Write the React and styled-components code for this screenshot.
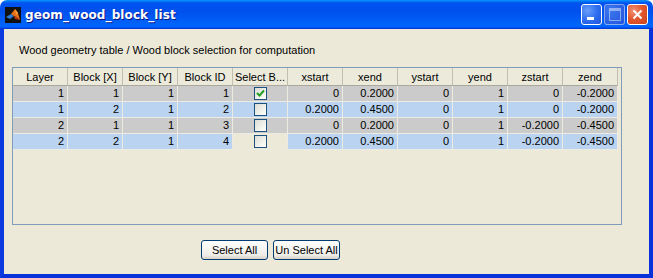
import React from 'react';
import styled, { createGlobalStyle } from 'styled-components';

const Global = createGlobalStyle`
  html, body { margin: 0; padding: 0; background: #fff; }
  body { font-family: "Liberation Sans", Arial, sans-serif; }
`;

const columns = ['Layer', 'Block [X]', 'Block [Y]', 'Block ID', 'Select B...', 'xstart', 'xend', 'ystart', 'yend', 'zstart', 'zend'];

const rows = [
  { vals: ['1', '1', '1', '1', true, '0', '0.2000', '0', '1', '0', '-0.2000'], tone: 'gray', boxTone: 'gray' },
  { vals: ['1', '2', '1', '2', false, '0.2000', '0.4500', '0', '1', '0', '-0.2000'], tone: 'blue', boxTone: 'blue' },
  { vals: ['2', '1', '1', '3', false, '0', '0.2000', '0', '1', '-0.2000', '-0.4500'], tone: 'gray', boxTone: 'gray' },
  { vals: ['2', '2', '1', '4', false, '0.2000', '0.4500', '0', '1', '-0.2000', '-0.4500'], tone: 'blue', boxTone: 'plain' },
];

const tones = { gray: '#cbcbcb', blue: '#b9d3f1', plain: '#ece9d8' };

const Window = styled.div`
  width: 653px;
  height: 278px;
  display: flex;
  flex-direction: column;
  overflow: hidden;
`;

const TitleBar = styled.div`
  height: 29px;
  flex: none;
  display: flex;
  align-items: center;
  padding: 0 5px 0 5px;
  border-radius: 7px 7px 0 0;
  background: linear-gradient(to bottom, #0997ff 0%, #0053ee 10%, #0050ee 40%, #0062f8 80%, #0066ff 90%, #005bff 94%, #003dd7 97%, #003dd7 100%);
`;

const Title = styled.span`
  margin-left: 4px;
  color: #fff;
  font-family: "DejaVu Sans", Verdana, sans-serif;
  font-weight: bold;
  font-size: 12px;
  letter-spacing: 0.1px;
  text-shadow: 1px 1px 0 #0a1883;
  flex: 1;
`;

const Controls = styled.div`
  display: flex;
  gap: 2px;
`;

const CtlButton = styled.div`
  width: 19px;
  height: 19px;
  border: 1px solid ${p => (p.$disabled ? 'rgba(255,255,255,0.45)' : '#fff')};
  border-radius: 3px;
  position: relative;
  background: ${p =>
    p.$close
      ? 'radial-gradient(circle at 30% 30%, #f0937a 0%, #e3582f 45%, #c9411b 100%)'
      : p.$disabled
      ? 'radial-gradient(circle at 30% 30%, #3d78ef 0%, #2b62e4 60%, #2155d8 100%)'
      : 'radial-gradient(circle at 30% 30%, #6a9ef8 0%, #2f6ff0 50%, #1d55dd 100%)'};
  display: flex;
  align-items: center;
  justify-content: center;
`;

const MinBar = styled.div`
  position: absolute;
  left: 5px;
  bottom: 4px;
  width: 7px;
  height: 3px;
  background: #fff;
`;

const MaxBox = styled.div`
  width: 10px;
  height: 9px;
  border: 1px solid rgba(255,255,255,0.45);
  border-top-width: 3px;
`;

const Body = styled.div`
  flex: 1;
  background: #ece9d8;
  border: 4px solid #0831d9;
  border-top: none;
  border-left-color: #0b3be0;
  display: flex;
  flex-direction: column;
`;

const Caption = styled.div`
  margin: 15px 0 0 15px;
  font-size: 11px;
  line-height: 13px;
  color: #000;
`;

const TableBox = styled.div`
  margin: 10px 0 0 8px;
  width: 608px;
  height: 156px;
  border: 1px solid #7f9db9;
  background: #ece9d8;
`;

const Grid = styled.table`
  border-collapse: separate;
  border-spacing: 0;
  table-layout: fixed;
  font-size: 11px;
`;

const Head = styled.th`
  width: 54px;
  height: 17px;
  padding: 0;
  font-weight: normal;
  text-align: center;
  background: #ebeadb;
  border-right: 1px solid #c2bfb0;
  border-bottom: 1px solid #aca899;
  white-space: nowrap;
  overflow: hidden;
`;

const Cell = styled.td`
  width: 54px;
  height: 15px;
  padding: 0 3px 0 0;
  box-sizing: border-box;
  text-align: right;
  line-height: 15px;
  background: ${p => tones[p.$tone]};
  border-right: 1px solid #ecebe2;
  border-bottom: 1px solid #ecebe2;
`;

const BoxCell = styled(Cell)`
  text-align: center;
  padding: 0;
  vertical-align: middle;
`;

const Check = styled.span`
  display: inline-block;
  width: 11px;
  height: 11px;
  border: 1px solid #1c5180;
  vertical-align: middle;
  margin-top: -1px;
  background: linear-gradient(135deg, #dcdcd7 0%, #f0f0ea 55%, #ffffff 100%);
  position: relative;
  svg { position: absolute; left: 1px; top: 1px; }
`;

const ButtonRow = styled.div`
  margin: 15px 0 0 197px;
  display: flex;
  gap: 5px;
`;

const Button = styled.button`
  width: 67px;
  height: 20px;
  padding: 0;
  font-family: "Liberation Sans", Arial, sans-serif;
  font-size: 11px;
  color: #000;
  border: 1px solid #003c74;
  border-radius: 3px;
  background: linear-gradient(to bottom, #ffffff 0%, #f6f6f2 40%, #ecebe6 80%, #d6d0c5 100%);
`;

const MatlabIcon = () => (
  <svg width="16" height="16" viewBox="0 0 16 16">
    <rect width="16" height="16" fill="#111" />
    <path d="M1 10 L6 7 L9 9 L5 12 Z" fill="#2a7bd1" />
    <path d="M6 7 L10 2 L13 6 L15 13 L11 10 L9 9 Z" fill="#e8701a" />
    <path d="M10 2 L13 6 L11 8 Z" fill="#f6a43a" />
    <path d="M9 9 L11 10 L15 13 L10 12 Z" fill="#b8300e" />
  </svg>
);

const Tick = () => (
  <svg width="9" height="9" viewBox="0 0 9 9">
    <path d="M1 4 L3.5 6.5 L8 1.5" stroke="#21a121" strokeWidth="2" fill="none" />
  </svg>
);

export default function App() {
  return (
    <Window>
      <Global />
      <TitleBar>
        <MatlabIcon />
        <Title>geom_wood_block_list</Title>
        <Controls>
          <CtlButton><MinBar /></CtlButton>
          <CtlButton $disabled><MaxBox /></CtlButton>
          <CtlButton $close>
            <svg width="11" height="11" viewBox="0 0 11 11">
              <path d="M1.5 1.5 L9.5 9.5 M9.5 1.5 L1.5 9.5" stroke="#fff" strokeWidth="2" />
            </svg>
          </CtlButton>
        </Controls>
      </TitleBar>
      <Body>
        <Caption>Wood geometry table / Wood block selection for computation</Caption>
        <TableBox>
          <Grid>
            <thead>
              <tr>{columns.map(c => <Head key={c}>{c}</Head>)}</tr>
            </thead>
            <tbody>
              {rows.map((r, i) => (
                <tr key={i}>
                  {r.vals.map((v, j) =>
                    j === 4 ? (
                      <BoxCell key={j} $tone={r.boxTone}>
                        <Check>{v && <Tick />}</Check>
                      </BoxCell>
                    ) : (
                      <Cell key={j} $tone={r.tone}>{v}</Cell>
                    )
                  )}
                </tr>
              ))}
            </tbody>
          </Grid>
        </TableBox>
        <ButtonRow>
          <Button>Select All</Button>
          <Button>Un Select All</Button>
        </ButtonRow>
      </Body>
    </Window>
  );
}
